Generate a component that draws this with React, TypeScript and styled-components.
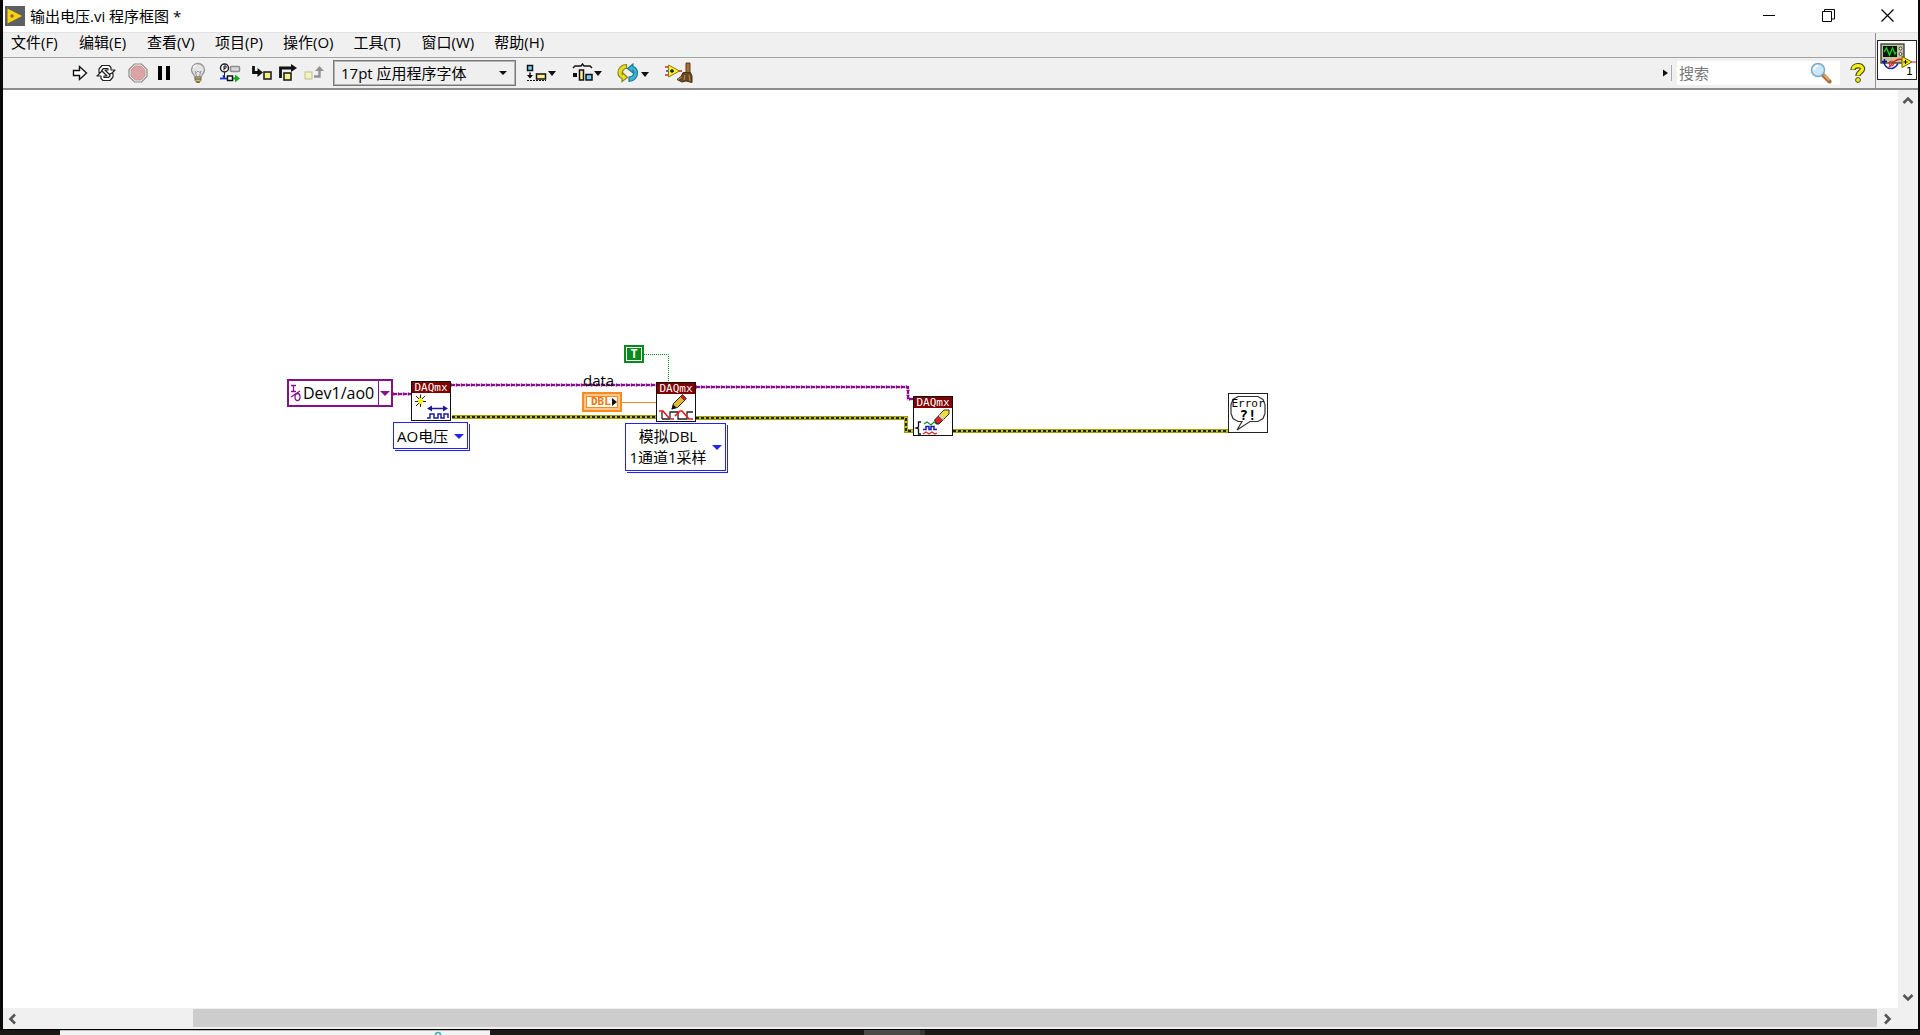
import React from "react";
import styled, { createGlobalStyle } from "styled-components";

const uiFont = '"Open Sans", "Noto Sans CJK SC", sans-serif';

const GlobalStyle = createGlobalStyle`
  *, *::before, *::after { box-sizing: border-box; }
  html, body { height: 100%; }
  body { margin: 0; background: #0b0808; overflow: hidden; font-family: ${uiFont}; font-size: 15px; color: #000; }
  #root { height: 100%; }
  button, input, select { font: inherit; color: inherit; border: 0; margin: 0; padding: 0; background: none; border-radius: 0; appearance: none; outline: none; }
  svg { display: block; }
`;

const Desktop = styled.div`
  display: flex;
  flex-direction: column;
  height: 100vh;
`;

const Window = styled.div`
  flex: 1;
  min-height: 0;
  margin: 0 2px 0 3px;
  display: flex;
  flex-direction: column;
  background: #fff;
`;

const TitleBar = styled.header`
  display: flex;
  align-items: center;
  height: 32px;
  padding: 0 1px 0 2px;
  background: #fff;
`;

const Title = styled.h1`
  flex: 1;
  margin: 0 0 0 5px;
  font-size: 15px;
  font-weight: 400;
  line-height: 22px;
`;

const CaptionButton = styled.button`
  width: 59px;
  height: 32px;
  padding-bottom: 2px;
  display: grid;
  place-items: center;
`;

const Header = styled.div`
  display: flex;
  background: #f0f0f0;
  border-top: 1px solid #e2e2e2;
  border-bottom: 2px solid #8e8e8e;
`;

const Bars = styled.div`
  flex: 1;
  min-width: 0;
`;

const MenuBar = styled.nav`
  display: flex;
  gap: 20px;
  height: 25px;
  padding: 0 0 6px 8px;
  align-items: center;
  border-bottom: 1px solid #a3a3a3;
`;

const MenuItem = styled.button`
  min-width: 48px;
  line-height: 18px;
  text-align: left;
  white-space: nowrap;
`;

const Toolbar = styled.div`
  display: flex;
  align-items: center;
  height: 30px;
  padding-left: 64px;
`;

const Group = styled.div<{ $gap?: number }>`
  display: flex;
  align-items: center;
  margin-right: ${(p) => p.$gap ?? 6}px;
`;

const ToolButton = styled.button<{ $wide?: boolean }>`
  display: flex;
  align-items: center;
  justify-content: center;
  width: ${(p) => (p.$wide ? 46 : 26)}px;
  height: 26px;
`;

const DropGroup = styled(Group)`
  margin-left: 2px;
`;

const SelectBox = styled.label`
  position: relative;
  display: block;
`;

const FontSelect = styled.select`
  width: 183px;
  height: 26px;
  padding: 0 32px 0 7px;
  background: #efefef;
  border: 1px solid #777;
  outline: 1px solid #b5b5b5;
  outline-offset: -2px;
`;

const Arrow = styled.span<{ $color?: string; $right?: number; $small?: boolean }>`
  position: absolute;
  right: ${(p) => p.$right ?? 9}px;
  top: 50%;
  margin-top: -2px;
  border: ${(p) => (p.$small ? 4 : 5)}px solid transparent;
  border-top-color: ${(p) => p.$color ?? "#111"};
  border-bottom: 0;
  pointer-events: none;
`;

const Spacer = styled.div`
  flex: 1;
`;

const SearchExpander = styled.button`
  display: flex;
  align-items: center;
  margin-right: 4px;
`;

const SearchField = styled.label`
  display: flex;
  align-items: center;
  width: 163px;
  height: 24px;
  padding-left: 2px;
  background: #fff;
`;

const SearchInput = styled.input`
  flex: 1;
  min-width: 0;
  &::placeholder { color: #777; opacity: 1; }
`;

const HelpButton = styled.button`
  width: 35px;
  display: grid;
  place-items: center;
`;

const IconPane = styled.div`
  width: 43px;
  padding-top: 7px;
  padding-left: 1px;
  border-left: 1px solid #8e8e8e;
`;

const ViIcon = styled.button`
  position: relative;
  display: block;
  width: 40px;
  height: 40px;
  background: #fff;
  border: 1px solid #222;
`;

const ViNumber = styled.span`
  position: absolute;
  right: 3px;
  bottom: 0;
  font: 11px/14px "DejaVu Sans", sans-serif;
`;

const Body = styled.div`
  flex: 1;
  min-height: 0;
  display: grid;
  grid-template: 1fr 21px / 1fr 20px;
`;

const Canvas = styled.main`
  position: relative;
  overflow: hidden;
  background: #fff;
`;

const ScrollV = styled.div`
  display: flex;
  flex-direction: column;
  justify-content: space-between;
  background: #f0f0f0;
`;

const ScrollH = styled.div`
  grid-column: 1 / 3;
  display: flex;
  background: #f0f0f0;
  padding: 1px 21px 2px 0;
`;

const ScrollButton = styled.button`
  width: 20px;
  height: 20px;
  display: grid;
  place-items: center;
  flex: none;
`;

const ThumbTrack = styled.div`
  flex: 1;
  padding-left: 9%;
`;

const Thumb = styled.div`
  height: 100%;
  background: #cdcdcd;
`;

const Taskbar = styled.footer`
  display: flex;
  height: 6px;
  padding-left: 60px;
  border-top: 1px solid #000;
  background: #1c1818;
`;

const TaskSearch = styled.div`
  width: 430px;
  padding-left: 374px;
  background: #f3f3f3;
  border-top: 1px solid #bbb;
  overflow: hidden;
`;

const TaskItem = styled.div`
  width: 61px;
  margin-left: 374px;
  background: #4d4949;
  border-right: 5px solid #393535;
`;

/* Diagram parts: free placement on the block diagram surface */
const Placed = styled.div<{ $x: number; $y: number }>`
  position: absolute;
  left: ${(p) => p.$x}px;
  top: ${(p) => p.$y}px;
`;

const Wires = styled.svg`
  position: absolute;
  left: 0;
  top: 0;
`;

const NodeBox = styled.div`
  width: 40px;
  height: 40px;
  background: #fff;
  border: 1px solid #111;
`;

const NodeTitle = styled.div`
  height: 11px;
  background: #800000;
  color: #fff;
  font: 11px/11px "DejaVu Sans Mono", monospace;
  text-align: center;
`;

const IoControl = styled.label`
  position: relative;
  display: flex;
  align-items: center;
  width: 106px;
  height: 28px;
  border: 2px solid #86108a;
  background: #fff;
`;

const IoSelect = styled.select`
  width: 75px;
  height: 24px;
  font-size: 16px;
  line-height: 22px;
`;

const IoDivider = styled.span`
  width: 1px;
  height: 24px;
  background: #86108a;
`;

const Instance = styled.div<{ $w: number; $h: number }>`
  position: relative;
  display: flex;
  align-items: center;
  width: ${(p) => p.$w}px;
  height: ${(p) => p.$h}px;
  background: #fff;
  border: 1px solid #2222ff;
  box-shadow: 1px 1px 0 #fff, 2px 2px 0 #2222ff;
`;

const InstanceSelect = styled.select`
  width: 100%;
  height: 100%;
  padding-left: 3px;
`;

const InstanceButton = styled.button`
  width: 84px;
  line-height: 21px;
  text-align: center;
  white-space: pre-line;
`;

const TrueConstant = styled.button`
  display: grid;
  place-items: center;
  width: 20px;
  height: 18px;
  background: #0a8a1a;
  outline: 1px solid #fff;
  outline-offset: -3px;
  color: #fff;
  font: bold 12px/12px "DejaVu Sans Mono", monospace;
`;

const Terminal = styled.div`
  display: flex;
  align-items: center;
  width: 40px;
  height: 20px;
  border: 2px solid #ff8a1c;
  background: #ffc690;
  padding: 2px;
`;

const TerminalType = styled.div`
  display: flex;
  align-items: center;
  justify-content: space-between;
  width: 100%;
  height: 12px;
  padding-left: 4px;
  border: 1px solid #ff8a1c;
  background: #fff;
  color: #f07808;
  font: bold 11px/10px "DejaVu Sans Mono", monospace;
`;

const FieldLabel = styled.div`
  line-height: 20px;
`;

const ErrorNode = styled.div`
  position: relative;
  width: 40px;
  height: 40px;
  border: 1px solid #222;
  background: #fff;
`;

const ErrorText = styled.div`
  position: absolute;
  inset: 4px 0 auto 0;
  text-align: center;
  font: 11px/12px "DejaVu Sans Mono", monospace;
`;

const ErrorMark = styled.div`
  font: bold 14px/11px "DejaVu Sans Mono", monospace;
`;

const DropTip = () => <path d="M22 8h8l-4 5z" fill="#111" />;

const menus = ["文件(F)", "编辑(E)", "查看(V)", "项目(P)", "操作(O)", "工具(T)", "窗口(W)", "帮助(H)"];

const RunIcon = () => (
  <svg width="16" height="18" viewBox="0 0 16 18"><path d="M1.5 6.5h6v-4l7 6.5-7 6.5v-4h-6z" fill="#fff" stroke="#111" strokeWidth="1.4" /></svg>
);
const LoopIcon = () => (
  <svg width="20" height="18" viewBox="0 0 20 18" fill="#fff" stroke="#222" strokeWidth="1.2" strokeLinejoin="round">
    <path d="M3 8.500V5l3-3.500h7l2 2V6h4l-5 5-5-5h3V4.500H7.500L6 6v2.500z" />
    <path d="M17 9.500V13l-3 3.500H7l-2-2V12H1l5-5 5 5H8v1.500h4.500L14 12V9.500z" />
  </svg>
);
const AbortIcon = () => (
  <svg width="20" height="20" viewBox="0 0 20 20">
    <path d="M6.500 1h7L19 6.500v7L13.500 19h-7L1 13.500v-7z" fill="#f4f0f0" stroke="#8c8c8c" strokeWidth="1.2" />
    <path d="M7 3h6l4 4v6l-4 4H7l-4-4V7z" fill="#dba3a5" stroke="#c79b9c" strokeWidth="1" />
  </svg>
);
const PauseIcon = () => (
  <svg width="12" height="14" viewBox="0 0 12 14"><path d="M0 0h4v14H0zM8 0h4v14H8z" fill="#000" /></svg>
);
const BulbIcon = () => (
  <svg width="18" height="22" viewBox="0 0 18 22">
    <path d="M9 1.500a6.500 6.500 0 0 0-6.500 6.500c0 3 2.700 4 3.300 7h6.400c.6-3 3.300-4 3.300-7A6.500 6.500 0 0 0 9 1.500z" fill="#e4e4e4" stroke="#999" strokeWidth="1.400" />
    <path d="M7.500 14l-1.500-5 1.500 1.500L9 9l1.500 1.500L12 9l-1.500 5" fill="none" stroke="#999" />
    <path d="M4.500 5.500q1-2 3-2.500" stroke="#fff" strokeWidth="1.500" fill="none" />
    <path d="M6 15h6v3.500l-2 2H8l-2-2z" fill="#d9bd4a" stroke="#777" />
    <path d="M6 17h6M7 20h4" stroke="#555" />
  </svg>
);
const RetainIcon = () => (
  <svg width="22" height="20" viewBox="0 0 22 20">
    <path d="M5.500 9v6" stroke="#222" />
    <circle cx="5.500" cy="5" r="4" fill="#fff" stroke="#222" strokeWidth="1.500" />
    <path d="M5 7.500V3h2v2.200H5" fill="none" stroke="#111" />
    <rect x="11.500" y="3.500" width="9" height="5" rx="1" fill="#d8d8d8" stroke="#8c8c8c" strokeWidth="1.500" />
    <path d="M1 15.500h7" stroke="#1538e0" strokeWidth="1.800" /><path d="M4.500 12v3" stroke="#1538e0" strokeWidth="1.500" />
    <rect x="8.500" y="13" width="5" height="4.500" fill="#fff" stroke="#111" strokeWidth="1.500" />
    <path d="M14 15.500h2" stroke="#0a9c1c" strokeWidth="1.800" /><path d="M16 11.500l5 4-5 4z" fill="#10b020" />
  </svg>
);
const StepIntoIcon = () => (
  <svg width="22" height="16" viewBox="0 0 22 16">
    <path d="M2.500 1v6.500h6" fill="none" stroke="#111" strokeWidth="2.800" /><path d="M6.500 3l5.500 4.500L6.500 12z" fill="#111" />
    <rect x="13" y="7" width="7" height="7" fill="#f5f182" stroke="#222" strokeWidth="1.600" />
  </svg>
);
const StepOverIcon = () => (
  <svg width="20" height="18" viewBox="0 0 20 18">
    <path d="M2.500 14V4h11" fill="none" stroke="#111" strokeWidth="2.800" /><path d="M13 0l6 4-6 4z" fill="#111" />
    <rect x="6" y="9" width="7" height="7" fill="#f5f182" stroke="#222" strokeWidth="1.600" />
  </svg>
);
const StepOutIcon = () => (
  <svg width="20" height="16" viewBox="0 0 20 16">
    <path d="M10 11.500h5.500V5" fill="none" stroke="#929292" strokeWidth="2.400" /><path d="M11 6l4.500-5L20 6z" fill="#929292" />
    <rect x="1" y="7" width="7" height="7" fill="#f4f2b8" stroke="#bdbd9c" strokeWidth="1" />
  </svg>
);
const AlignIcon = () => (
  <svg width="30" height="20" viewBox="0 0 30 20">
    <rect x="1.500" y="2.500" width="5" height="5" fill="#6cd3f3" stroke="#111" strokeWidth="1.500" />
    <path d="M4 9.500v4" stroke="#111" strokeWidth="1.500" /><path d="M1 12h6l-3 3.500z" />
    <path d="M1 17.500h19" stroke="#111" strokeDasharray="2 1" />
    <rect x="10.500" y="11" width="9" height="5" fill="#f8f28c" stroke="#111" strokeWidth="1.500" /><DropTip />
  </svg>
);
const DistributeIcon = () => (
  <svg width="30" height="20" viewBox="0 0 30 20">
    <path d="M1 5l2-2h6l1.500-2L12 3h6l2 2" fill="none" stroke="#111" strokeWidth="1.400" />
    <rect x="1" y="10" width="4" height="4" fill="#111" />
    <rect x="7.500" y="7" width="4" height="10" fill="#f8f28c" stroke="#111" strokeWidth="1.500" />
    <rect x="14" y="11.500" width="6" height="5.500" fill="#6cd3f3" stroke="#111" strokeWidth="1.500" /><DropTip />
  </svg>
);
const ReorderIcon = () => (
  <svg width="32" height="20" viewBox="0 0 32 20">
    <path d="M9.500 1.500C4.500 1.500 1 5 1 9.500c0 3 1.500 5 4 6V18.500l5.500-4-5-5v2.500C4.500 9 6 5.500 9.500 5.500z" fill="#e8df25" stroke="#8f861a" strokeWidth="1.200" />
    <path d="M12 18.500c5 0 8.500-4 8.500-8.500 0-3-1.500-5.500-4.500-6.500V1L10.500 5.500 16 10V7.500c2 2.500 0 6.500-4 6.500z" fill="#3fb4d2" stroke="#1d7d94" strokeWidth="1.200" />
    <path d="M24 9h8l-4 5z" fill="#111" />
  </svg>
);
const CleanupIcon = () => (
  <svg width="28" height="22" viewBox="0 0 28 22">
    <path d="M0 5h3M0 13h3M12 9h5" stroke="#e02020" strokeWidth="1.500" /><path d="M1 9h2" stroke="#2040d0" strokeWidth="1.500" />
    <path d="M3.500 3v12l11-6z" fill="#fbf22a" stroke="#8a7a10" /><path d="M5 9h4M7 7v4" stroke="#111" strokeWidth="1.300" />
    <path d="M21 1h4v10h-4z" fill="#a5702f" stroke="#5a3a14" />
    <path d="M18 10.500h7.500L27 14v6.500l-6-1.500-4 1-5-2.500 4-3z" fill="#684826" stroke="#49311a" /><path d="M17 15l-4 2.500M24 13l1 6M20 13l-1 5" stroke="#bd9250" />
  </svg>
);
const MagnifierIcon = () => (
  <svg width="22" height="22" viewBox="0 0 22 22">
    <path d="M12.500 12.500l7 7" stroke="#a56a42" strokeWidth="4" strokeLinecap="round" /><path d="M14 13l5.500 5.500" stroke="#eda35a" strokeWidth="2" />
    <circle cx="8" cy="8" r="6.500" fill="#c9e9fb" stroke="#7fa9c8" strokeWidth="1.500" /><path d="M4 8a4 4 0 0 1 4-4" stroke="#fff" strokeWidth="2" fill="none" />
  </svg>
);
const HelpIcon = () => (
  <svg width="16" height="20" viewBox="0 0 16 20" fill="none">
    <path d="M3 7C3 1.500 13 1.500 12.500 6c-.3 3-4.500 3-4.500 7" stroke="#4c4a10" strokeWidth="5.400" /><path d="M3 6.500C3 1.500 13 1.500 12.500 6c-.3 3-4.500 3-4.500 6.500" stroke="#f4ee16" strokeWidth="3.200" />
    <circle cx="8" cy="17" r="2.400" fill="#f4ee16" stroke="#4c4a10" />
  </svg>
);
const ScopeIcon = () => (
  <svg width="38" height="38" viewBox="0 0 38 38">
    <rect x="3" y="3" width="23" height="19" fill="#c9c39b" stroke="#333" strokeWidth="1.300" /><rect x="5" y="5" width="14" height="11" fill="#0a1a0a" />
    <path d="M6 11l2.500-4 3 7 3-7 2.500 6 1-2" fill="none" stroke="#18d428" strokeWidth="1.300" />
    <circle cx="22.500" cy="7.500" r="1.500" fill="#eee" stroke="#444" /><circle cx="22.500" cy="13" r="1.500" fill="#eee" stroke="#444" />
    <path d="M6 20v2q2 6 8 5.500 4-1 6-5" fill="none" stroke="#1526b8" strokeWidth="1.500" />
    <path d="M6.500 18v5M4 20.500h5" stroke="#14148a" strokeWidth="1.500" />
    <path d="M11 26l6-6q4-3 8-1" fill="none" stroke="#e81818" strokeWidth="1.500" />
    <circle cx="13.500" cy="22.500" r="2.500" fill="none" stroke="#e81818" /><path d="M34 21h4" stroke="#e81818" />
    <path d="M24 15.500v11l10-5.500z" fill="#f6e71a" stroke="#6a6410" /><path d="M25.500 21h4M27.500 19v4" stroke="#111" />
  </svg>
);

const Chevron = ({ d }: { d: string }) => (
  <svg width="12" height="12" viewBox="0 0 12 12"><path d={d} fill="none" stroke="#555" strokeWidth="2.600" /></svg>
);

const CreateGlyph = () => (
  <svg width="38" height="27" viewBox="0 0 38 27">
    <path d="M7 4h3v8H7zM5 7h7v2H5z" fill="#f2ee1c" />
    <path d="M4 3l3 3M8.500 1.500V5M13 3l-3 3M3 8.500h3M11 8.500h3M4 13l3-3M8.500 11v3" stroke="#222" />
    <path d="M18 15.500h16" stroke="#1a1aa0" strokeWidth="1.500" /><path d="M15 15.500l5-3v6zM36 15.500l-5-3v6z" fill="#1a1aa0" />
    <path d="M15 25h3v-4h4v4h4v-4h3v4h3v-4h4v4" fill="none" stroke="#1a1aa0" strokeWidth="1.500" />
  </svg>
);
const WriteGlyph = () => (
  <svg width="38" height="27" viewBox="0 0 38 27">
    <path d="M15 15l1.500-5.500L24 2l4 4-7.500 7.500z" fill="#e2b832" stroke="#222" /><path d="M23.500 2.500L25.500.500l4 4-2 2z" fill="#d41a1a" stroke="#333" strokeWidth=".8" /><path d="M14.500 15.500l1.500-5 3.500 3z" fill="#111" />
    <path d="M5 25v-8h0M5 25h8v-7h8v7h9v-7h6" fill="none" stroke="#222" strokeWidth="1.300" />
    <path d="M2 17h4l6 7M14 25h3M18 22l5-5h2l7 8h4" fill="none" stroke="#e81c1c" strokeWidth="1.700" />
  </svg>
);
const ClearGlyph = () => (
  <svg width="38" height="27" viewBox="0 0 38 27">
    <path d="M7 14H4.500v5L2 20l2.500 1v5H7" fill="none" stroke="#111" strokeWidth="1.300" />
    <path d="M10 16l3-2 4 3 3-3 3 2" fill="none" stroke="#12922c" strokeWidth="1.300" />
    <path d="M9 21.500h3v-3h3v3h2v-3h3v3h3" fill="none" stroke="#1a1ab4" strokeWidth="1.500" />
    <path d="M9 26l3-2 3 2 3-2 3 2 2-1" fill="none" stroke="#e02828" strokeWidth="1.300" />
    <path d="M24 8l6-6h5v4l-7 7z" fill="#f1dc3c" stroke="#333" /><path d="M20.500 12l4-4 4.500 4-4 4h-2.500z" fill="#e02020" stroke="#222" /><path d="M25 7l4.500 4.500" stroke="#ccc" strokeWidth="2" />
  </svg>
);

const errorRoutes = ["M449 327H653", "M693 328H903V341H910", "M950 341H1225"];
const taskRoutes = ["M390 304H408", "M448 295H653", "M693 297H905V309H910"];

const DiagramWires = () => (
  <Wires width="1300" height="420" viewBox="0 0 1300 420" fill="none" aria-hidden="true">
    {taskRoutes.map((d) => (
      <g key={d}>
        <path d={d} stroke="#d9b3da" strokeWidth="3" />
        <path d={d} stroke="#86108a" strokeWidth="3" strokeDasharray="1 4" />
        <path d={d} stroke="#86108a" strokeWidth="2" strokeDasharray="4 1" />
      </g>
    ))}
    {errorRoutes.map((d) => (
      <g key={d}>
        <path d={d} stroke="#7c7c10" strokeWidth="4" />
        <path d={d} stroke="#c4c414" strokeWidth="3" />
        <path d={d} stroke="#222208" strokeWidth="2" strokeDasharray="3 2" />
      </g>
    ))}
    <path d="M641 264.500H665.500V292" stroke="#0a8a1a" strokeDasharray="1 1" />
    <path d="M619 312.500H653" stroke="#ff8a1c" />
  </Wires>
);

export default function App() {
  return (
    <>
      <GlobalStyle />
      <Desktop>
        <Window>
          <TitleBar>
            <svg width="20" height="20" viewBox="0 0 20 20">
              <path d="M0 0h20v20H0z" fill="#5d5f62" /><path d="M2.500 2.500v15L17 10z" fill="#fad20c" /><path d="M5 10h4M7 8v4" stroke="#555" />
            </svg>
            <Title>输出电压.vi 程序框图 *</Title>
            <CaptionButton aria-label="最小化"><svg width="13" height="13" viewBox="0 0 13 13"><path d="M0 6.500h12" stroke="#000" /></svg></CaptionButton>
            <CaptionButton aria-label="还原">
              <svg width="13" height="13" viewBox="0 0 13 13" fill="none" stroke="#000"><path d="M.5 2.500h9v10h-9zM2.500 2V.5h10v9.500H10" /></svg>
            </CaptionButton>
            <CaptionButton aria-label="关闭"><svg width="13" height="13" viewBox="0 0 13 13"><path d="M.5.500l12 12M12.500.500l-12 12" stroke="#000" strokeWidth="1.200" /></svg></CaptionButton>
          </TitleBar>
          <Header>
            <Bars>
              <MenuBar>{menus.map((m) => <MenuItem key={m}>{m}</MenuItem>)}</MenuBar>
              <Toolbar>
                <Group><ToolButton aria-label="运行"><RunIcon /></ToolButton><ToolButton aria-label="连续运行"><LoopIcon /></ToolButton></Group>
                <Group $gap={8}><ToolButton aria-label="中止"><AbortIcon /></ToolButton><ToolButton aria-label="暂停"><PauseIcon /></ToolButton></Group>
                <Group><ToolButton aria-label="高亮显示执行过程"><BulbIcon /></ToolButton></Group>
                <Group><ToolButton aria-label="保存连线值"><RetainIcon /></ToolButton></Group>
                <Group>
                  <ToolButton aria-label="单步步入"><StepIntoIcon /></ToolButton>
                  <ToolButton aria-label="单步步过"><StepOverIcon /></ToolButton>
                  <ToolButton aria-label="单步步出"><StepOutIcon /></ToolButton>
                </Group>
                <SelectBox>
                  <FontSelect aria-label="字体"><option>17pt 应用程序字体</option></FontSelect>
                  <Arrow $small />
                </SelectBox>
                <DropGroup>
                  <ToolButton $wide aria-label="对齐对象"><AlignIcon /></ToolButton>
                  <ToolButton $wide aria-label="分布对象"><DistributeIcon /></ToolButton>
                  <ToolButton $wide aria-label="重新排序"><ReorderIcon /></ToolButton>
                  <ToolButton $wide aria-label="整理程序框图"><CleanupIcon /></ToolButton>
                </DropGroup>
                <Spacer />
                <SearchExpander aria-label="展开搜索">
                  <svg width="10" height="16" viewBox="0 0 10 16"><path d="M0 4.500l5 3.500-5 3.500z" fill="#111" /><path d="M8.500 0v16" stroke="#aaa" /></svg>
                </SearchExpander>
                <SearchField><SearchInput aria-label="搜索" placeholder="搜索" /><Group $gap={8}><MagnifierIcon /></Group></SearchField>
                <HelpButton aria-label="帮助"><HelpIcon /></HelpButton>
              </Toolbar>
            </Bars>
            <IconPane><ViIcon aria-label="VI 图标"><ScopeIcon /><ViNumber>1</ViNumber></ViIcon></IconPane>
          </Header>
          <Body>
            <Canvas>
              <DiagramWires />
              <Placed $x={284} $y={289}>
                <IoControl>
                  <svg width="14" height="20" viewBox="0 0 14 20" fill="none" stroke="#86108a">
                    <path d="M2 2.500h5M4.500 2.500v6M2 8.500h5M2 14l9-6" strokeWidth="1.300" /><ellipse cx="8.500" cy="14" rx="2.500" ry="3.500" strokeWidth="1.300" />
                  </svg>
                  <IoSelect aria-label="物理通道"><option>Dev1/ao0</option></IoSelect>
                  <IoDivider />
                  <Arrow $color="#86108a" $right={1} />
                </IoControl>
              </Placed>
              <Placed $x={408} $y={291}><NodeBox><NodeTitle>DAQmx</NodeTitle><CreateGlyph /></NodeBox></Placed>
              <Placed $x={390} $y={332}>
                <Instance $w={75} $h={27}>
                  <InstanceSelect aria-label="创建通道类型"><option>AO电压</option></InstanceSelect>
                  <Arrow $color="#2222ff" $right={3} />
                </Instance>
              </Placed>
              <Placed $x={580} $y={280}><FieldLabel>data</FieldLabel></Placed>
              <Placed $x={579} $y={302}>
                <Terminal><TerminalType>DBL<svg width="6" height="8" viewBox="0 0 6 8"><path d="M1 0l5 4-5 4z" fill="#111" /></svg></TerminalType></Terminal>
              </Placed>
              <Placed $x={621} $y={255}><TrueConstant aria-label="真常量">T</TrueConstant></Placed>
              <Placed $x={653} $y={292}><NodeBox><NodeTitle>DAQmx</NodeTitle><WriteGlyph /></NodeBox></Placed>
              <Placed $x={622} $y={333}>
                <Instance $w={101} $h={48}>
                  <InstanceButton>{"模拟DBL\n1通道1采样"}</InstanceButton>
                  <Arrow $color="#2222ff" $right={3} />
                </Instance>
              </Placed>
              <Placed $x={910} $y={306}><NodeBox><NodeTitle>DAQmx</NodeTitle><ClearGlyph /></NodeBox></Placed>
              <Placed $x={1225} $y={303}>
                <ErrorNode>
                  <svg width="38" height="38" viewBox="0 0 38 38"><path d="M9 2.500h20l5 3 2 5v9l-2 5-5 3h-8L8 36l5-8.500H9l-5-3-2-5v-9l2-5z" fill="#fff" stroke="#333" strokeWidth="1.200" /></svg>
                  <ErrorText>Error<ErrorMark>?!</ErrorMark></ErrorText>
                </ErrorNode>
              </Placed>
            </Canvas>
            <ScrollV>
              <ScrollButton aria-label="向上滚动"><Chevron d="M1.500 9L6 4.500 10.500 9" /></ScrollButton>
              <ScrollButton aria-label="向下滚动"><Chevron d="M1.500 3L6 7.500 10.500 3" /></ScrollButton>
            </ScrollV>
            <ScrollH>
              <ScrollButton aria-label="向左滚动"><Chevron d="M8 1.500L3.500 6 8 10.500" /></ScrollButton>
              <ThumbTrack><Thumb /></ThumbTrack>
              <ScrollButton aria-label="向右滚动"><Chevron d="M4 1.500L8.500 6 4 10.500" /></ScrollButton>
            </ScrollH>
          </Body>
        </Window>
        <Taskbar>
          <TaskSearch><svg width="8" height="6" viewBox="0 0 8 6"><circle cx="4" cy="4" r="2.500" fill="none" stroke="#35b3c4" strokeWidth="1.500" /></svg></TaskSearch>
          <TaskItem />
        </Taskbar>
      </Desktop>
    </>
  );
}
